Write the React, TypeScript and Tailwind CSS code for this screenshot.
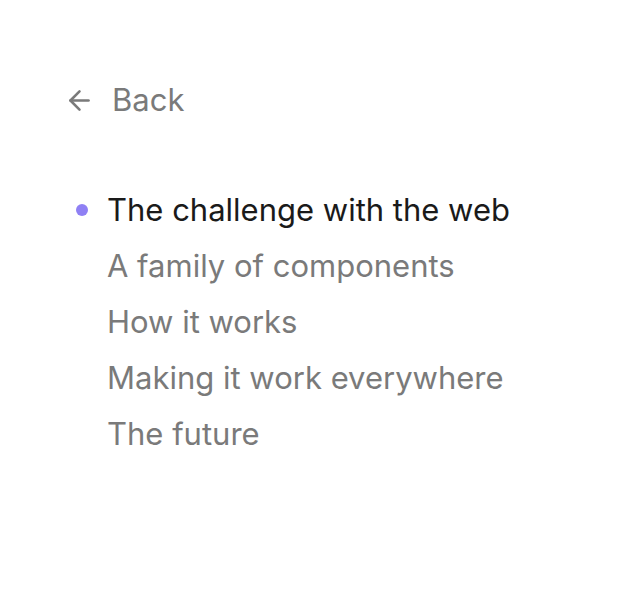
import { ArrowLeft } from 'lucide-react'

const ITEMS = [
  'The challenge with the web',
  'A family of components',
  'How it works',
  'Making it work everywhere',
  'The future',
]

export default function App() {
  return (
    <div
      className="h-[591px] w-[640px] bg-white px-[64px] pt-[82px]"
      style={{ fontFamily: 'Inter, "Noto Sans", sans-serif' }}
    >
      <a className="flex items-center gap-[17px] text-[31px] leading-[36px] text-[#7a7a7a]">
        <ArrowLeft size={31} strokeWidth={2} />
        Back
      </a>

      <ul className="mt-[64px] flex flex-col">
        {ITEMS.map((t, i) => (
          <li key={t} className="flex h-[56px] items-center text-[31px]">
            <span className="flex w-[43px] pl-[12px]">
              {i === 0 && <span className="h-[12px] w-[12px] rounded-full bg-[#8f80f4]" />}
            </span>
            <span className={i === 0 ? 'text-[#1a1a1a]' : 'text-[#7a7a7a]'}>{t}</span>
          </li>
        ))}
      </ul>
    </div>
  )
}
